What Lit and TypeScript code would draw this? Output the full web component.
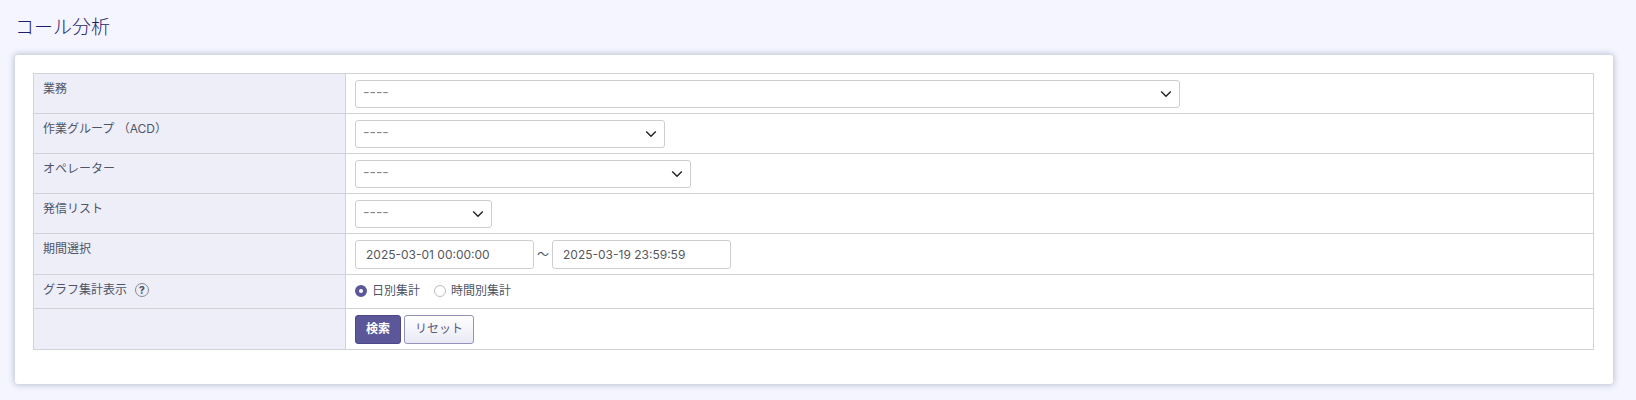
import { LitElement, html, css } from "lit";
import { customElement, property } from "lit/decorators.js";

const base = css`
  *,
  *::before,
  *::after {
    box-sizing: border-box;
  }
  select,
  input,
  button {
    margin: 0;
    font: inherit;
  }
`;

@customElement("select-field")
class SelectField extends LitElement {
  @property() name = "";
  @property() label = "";

  static styles = [
    base,
    css`
      :host {
        display: block;
        max-width: 100%;
      }
      .wrap {
        display: grid;
        align-items: center;
      }
      .select {
        grid-area: 1 / 1;
        width: 100%;
        height: 28px;
        padding: 0 30px 4px 7px;
        appearance: none;
        border: 1px solid #ccced0;
        border-radius: 3px;
        background: #fff;
        color: #85878c;
        font-size: 14px;
      }
      .chevron {
        grid-area: 1 / 1;
        justify-self: end;
        margin-right: 8px;
        pointer-events: none;
      }
    `,
  ];

  render() {
    return html`
      <div class="wrap">
        <select class="select" name=${this.name} aria-label=${this.label}>
          <option value="">----</option>
        </select>
        <svg class="chevron" width="12" height="12" viewBox="0 0 12 12" aria-hidden="true">
          <path d="M1.2 3.4 L6 8.2 L10.8 3.4" fill="none" stroke="#222" stroke-width="1.4" />
        </svg>
      </div>
    `;
  }
}

@customElement("app-root")
class AppRoot extends LitElement {
  static styles = [
    base,
    css`
      :host {
        display: block;
        min-height: 100vh;
        box-sizing: border-box;
        padding: 16px 23px 16px 15px;
        background: #f4f5ff;
        color: #4e5566;
        font: 400 12px/18px Inter, "Noto Sans CJK JP", sans-serif;
      }
      .title {
        margin: 0 0 15px;
        color: #1f1d6e;
        font-size: 19px;
        line-height: 24px;
        font-weight: 300;
      }
      .card {
        padding: 18px 19px 34px 18px;
        border-radius: 3px;
        background: #fff;
        box-shadow: 0 0 6px 1px #bcc0d0;
      }
      .filters {
        width: 100%;
        border-collapse: collapse;
        table-layout: fixed;
      }
      .head {
        width: 20%;
        padding: 6px 9px 5px;
        border: 1px solid #d2d3d8;
        background: #eeeef9;
        font-weight: 400;
        text-align: left;
        vertical-align: top;
      }
      .cell {
        padding: 6px 9px 5px;
        border: 1px solid #d2d3d8;
      }
      .caption {
        display: flex;
        align-items: center;
        gap: 8px;
      }
      .help {
        display: grid;
        place-items: center;
        width: 14px;
        height: 14px;
        padding: 0;
        border: 1px solid #85889a;
        border-radius: 50%;
        background: none;
        color: #4e5566;
        font-size: 10px;
        font-weight: 800;
        line-height: 12px;
      }
      .business {
        width: 825px;
      }
      .group {
        width: 310px;
      }
      .operator {
        width: 336px;
      }
      .list {
        width: 137px;
      }
      .range {
        display: flex;
        align-items: center;
        gap: 3px;
      }
      .date {
        width: 179px;
        height: 29px;
        padding: 0 10px 1px;
        border: 1px solid #ccced0;
        border-radius: 3px;
        background: #fff;
        color: #55575c;
      }
      .choices {
        display: flex;
        gap: 14px;
        padding-bottom: 3px;
        line-height: 19px;
      }
      .choice {
        display: flex;
        align-items: center;
        gap: 5px;
      }
      .radio {
        width: 12px;
        height: 12px;
        appearance: none;
        border: 1px solid #b9bbc3;
        border-radius: 50%;
        background: #fff;
      }
      .radio:checked {
        border: 4px solid #5b5799;
      }
      .actions {
        display: flex;
        gap: 3px;
      }
      .button {
        height: 29px;
        padding: 0 10px 2px;
        border: 1px solid #9492bb;
        border-radius: 3px;
        background: linear-gradient(#fff, #e9e9f5);
        color: #5c5a80;
      }
      .primary {
        border-color: #4b4788;
        background: #5b5799;
        color: #fff;
        font-weight: 700;
      }
    `,
  ];

  private selects = [
    { name: "business", label: "業務" },
    { name: "group", label: "作業グループ （ACD）" },
    { name: "operator", label: "オペレーター" },
    { name: "list", label: "発信リスト" },
  ];

  render() {
    return html`
      <h1 class="title">コール分析</h1>
      <form class="card" @submit=${(e: Event) => e.preventDefault()}>
        <table class="filters">
          <tbody>
            ${this.selects.map(
              (s) => html`
                <tr>
                  <th class="head" scope="row">${s.label}</th>
                  <td class="cell">
                    <select-field class=${s.name} name=${s.name} label=${s.label}></select-field>
                  </td>
                </tr>
              `
            )}
            <tr>
              <th class="head" scope="row">期間選択</th>
              <td class="cell">
                <div class="range">
                  <input class="date" type="text" name="from" aria-label="期間選択 開始" value="2025-03-01 00:00:00" />
                  <span>～</span>
                  <input class="date" type="text" name="to" aria-label="期間選択 終了" value="2025-03-19 23:59:59" />
                </div>
              </td>
            </tr>
            <tr>
              <th class="head" scope="row">
                <div class="caption">
                  <span>グラフ集計表示</span>
                  <button class="help" type="button">?</button>
                </div>
              </th>
              <td class="cell">
                <div class="choices">
                  <label class="choice"><input class="radio" type="radio" name="unit" value="day" checked />日別集計</label>
                  <label class="choice"><input class="radio" type="radio" name="unit" value="hour" />時間別集計</label>
                </div>
              </td>
            </tr>
            <tr>
              <th class="head"></th>
              <td class="cell">
                <div class="actions">
                  <button class="button primary" type="submit">検索</button>
                  <button class="button" type="reset">リセット</button>
                </div>
              </td>
            </tr>
          </tbody>
        </table>
      </form>
    `;
  }
}
